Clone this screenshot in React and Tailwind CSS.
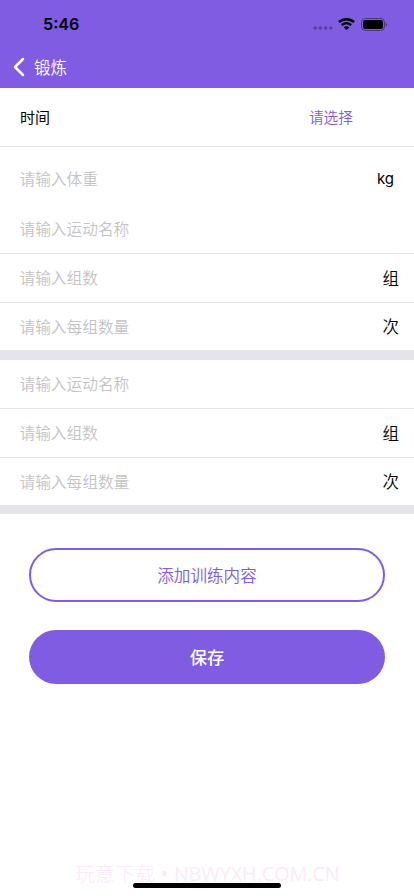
const cjk = "font-['Noto_Sans_CJK_SC',sans-serif]";

function StatusBar() {
  return (
    <div className="flex h-12 items-center pl-[43px] pr-[27px]">
      <span className="font-['Inter',sans-serif] text-[16.2px] font-semibold leading-none text-black">5:46</span>
      <div className="ml-auto flex items-center">
        <svg className="mr-[5px] mt-2" width="20" height="4" viewBox="0 0 20 4" fill="#000" fillOpacity=".3">
          {[2.2, 7.4, 12.6, 17.8].map((cx) => (
            <circle key={cx} cx={cx} cy="2" r="1.8" />
          ))}
        </svg>
        <svg className="mr-[6px]" width="17" height="12" viewBox="0 0 17 12" fill="none" stroke="#000">
          <path d="M1 4.2C5.2.2 11.8.2 16 4.2" strokeWidth="2.4" />
          <path d="M3.8 7.1c2.7-2.5 6.7-2.5 9.4 0" strokeWidth="2.3" />
          <path d="M8.5 12 5.8 9.3c1.5-1.4 3.9-1.4 5.4 0Z" fill="#000" stroke="none" />
        </svg>
        <svg width="26" height="13" viewBox="0 0 26 13">
          <rect x=".5" y=".5" width="23" height="12" rx="3.8" fill="none" stroke="#000" strokeOpacity=".42" />
          <rect x="2" y="2" width="20" height="9" rx="2.3" />
          <path d="M24.7 4.4v4.2c1.5-.7 1.5-3.5 0-4.2Z" fillOpacity=".5" />
        </svg>
      </div>
    </div>
  );
}

function Field({ placeholder, unit, last }) {
  return (
    <div className={`flex items-center justify-between pl-[19.5px] pr-[15px] ${last ? "h-[47px]" : "h-[49px] border-b border-[#e6e6e8]"}`}>
      <span className="text-[15.7px] font-[350] text-[#c3c3c5]">{placeholder}</span>
      {unit && <span className="text-[16.5px] font-[350] text-black">{unit}</span>}
    </div>
  );
}

function ExerciseGroup() {
  return (
    <section>
      <Field placeholder="请输入运动名称" />
      <Field placeholder="请输入组数" unit="组" />
      <Field placeholder="请输入每组数量" unit="次" last />
    </section>
  );
}

export default function App() {
  return (
    <div className={`relative flex h-[896px] w-[414px] flex-col overflow-hidden bg-white leading-none ${cjk}`}>
      <header className="h-[88.4px] shrink-0 bg-[#805ce2]">
        <StatusBar />
        <div className="flex h-[38px] items-center pl-[13px] text-white">
          <svg width="12" height="20" viewBox="0 0 12 20" fill="none" stroke="currentColor" strokeWidth="2.5" strokeLinecap="round" strokeLinejoin="round">
            <path d="M10 2 2 10l8 8" />
          </svg>
          <span className="ml-[9px] text-[16.5px] font-[350]">锻炼</span>
        </div>
      </header>
      <div className="flex h-[58.6px] shrink-0 items-center justify-between border-b border-[#e6e6e8] pb-px pl-5 pr-[61px]">
        <span className="text-[15px] text-black">时间</span>
        <span className="pt-[2px] text-[14.7px] font-[350] text-[#805ce2]">请选择</span>
      </div>
      <div className="flex h-[58px] shrink-0 items-center justify-between pl-[19.5px] pr-5 pt-[5px]">
        <span className="text-[15.7px] font-[350] text-[#c3c3c5]">请输入体重</span>
        <span className="pt-px font-['Inter',sans-serif] text-[15px] text-black">kg</span>
      </div>
      <ExerciseGroup />
      <div className="h-[10px] shrink-0 bg-[#e5e4ea]" />
      <ExerciseGroup />
      <div className="h-[9.5px] shrink-0 bg-[#e5e4ea]" />
      <div className="flex flex-col gap-[28.5px] px-[29px] pt-[33.5px]">
        <button className="h-[53.6px] rounded-full border-2 border-[#805ce2] pt-px text-[16.6px] font-[350] text-[#805ce2]">添加训练内容</button>
        <button className="h-[53.6px] rounded-full bg-[#805ce2] text-[17.3px] font-medium text-white">保存</button>
      </div>
      <footer className="mt-auto flex h-[34px] shrink-0 pl-[75px] pt-[2px] text-[20px] font-light text-[#fce9fb]">
        <span>玩意下载</span>
        <span className="w-[19px] text-center font-['Noto_Sans',sans-serif] font-normal">•</span>
        <span className="whitespace-nowrap font-['Open_Sans',sans-serif] text-[19.7px] font-normal">NBWYXH.COM.CN</span>
      </footer>
      <div className="absolute bottom-2 left-[133px] h-[5px] w-[148px] rounded-full bg-black" />
    </div>
  );
}
